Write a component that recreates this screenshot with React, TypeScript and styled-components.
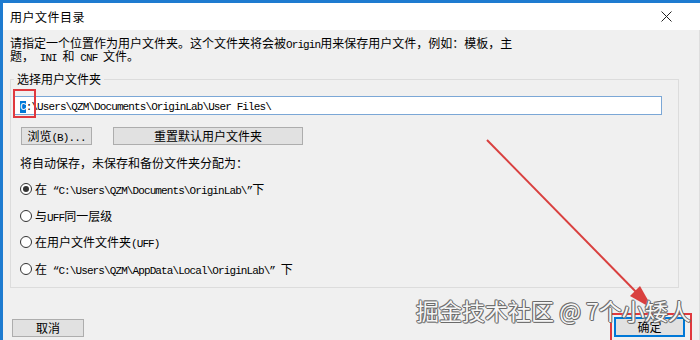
import React from "react";
import styled, { createGlobalStyle } from "styled-components";

const CJK = `"Noto Sans CJK SC", "Noto Sans", sans-serif`;

const Global = createGlobalStyle`
  html, body { margin: 0; padding: 0; background: #fff; }
  body { width: 700px; height: 340px; overflow: hidden; font-family: ${CJK}; }
`;

const Page = styled.div`
  position: relative;
  width: 700px;
  height: 340px;
  overflow: hidden;
`;

const Window = styled.div`
  width: 700px;
  height: 340px;
  box-sizing: border-box;
  border-top: 3px solid #1e7bd0;
  border-left: 3px solid #1e7bd0;
  display: flex;
  flex-direction: column;
  font-family: ${CJK};
  font-size: 12px;
  color: #000;
`;

const TitleBar = styled.div`
  height: 27px;
  flex: none;
  background: #fff;
  display: flex;
  align-items: center;
  justify-content: space-between;
  padding: 0 28px 0 7px;
`;

const Title = styled.span`
  font-size: 12px;
  letter-spacing: 0.5px;
  line-height: 14px;
`;

const Body = styled.div`
  flex: 1;
  background: #f0f0f0;
  display: flex;
  flex-direction: column;
  padding: 6px 14px 3px 7px;
  border-right: 1px solid #dedede;
`;

const Desc = styled.p`
  margin: 0;
  font-size: 12px;
  line-height: 13px;
`;

const Mono = styled.span`
  font-family: "Liberation Mono", monospace;
  font-size: 11px;
  line-height: 0;
  letter-spacing: -0.9px;
`;

const Label = styled.span`
  display: block;
  line-height: 14px;
  white-space: pre;
`;

const Group = styled.fieldset`
  margin: 10px 6px 0 0;
  border: 1px solid #dcdcdc;
  padding: 0 0 11px 0;
  min-width: 0;
`;

const Legend = styled.legend`
  margin-left: 3px;
  padding: 0 3px;
  font-size: 12px;
  line-height: 14px;
`;

const GroupInner = styled.div`
  display: flex;
  flex-direction: column;
  padding-top: 10px;
`;

const PathInput = styled.div`
  margin-left: 3px;
  width: 648px;
  height: 19px;
  box-sizing: border-box;
  background: #fff;
  border: 1px solid #7ba7d6;
  display: flex;
  align-items: center;
  padding-left: 5px;
`;

const Sel = styled.span`
  background: #0078d7;
  color: #fff;
  line-height: 12px;
  display: inline-block;
`;

const ButtonRow = styled.div`
  display: flex;
  gap: 21px;
  margin-top: 12px;
  padding-left: 10px;
`;

const Button = styled.div<{ $w: number; $focus?: boolean }>`
  width: ${(p) => p.$w}px;
  height: ${(p) => (p.$focus ? 20 : 18)}px;
  box-sizing: border-box;
  background: #e1e1e1;
  border: ${(p) => (p.$focus ? "2px solid #0078d7" : "1px solid #adadad")};
  display: flex;
  align-items: center;
  justify-content: center;
  font-size: 12px;
`;

const Note = styled.div`
  margin-top: 11px;
  padding-left: 9px;
  line-height: 14px;
`;

const RadioList = styled.div`
  display: flex;
  flex-direction: column;
  gap: 12.5px;
  margin-top: 12px;
  padding-left: 9px;
`;

const RadioRow = styled.div`
  display: flex;
  align-items: center;
  height: 14px;
`;

const RadioDot = styled.span<{ $on?: boolean }>`
  width: 12px;
  height: 12px;
  box-sizing: border-box;
  border-radius: 50%;
  border: 1px solid #333;
  background: #fff;
  margin-right: 3px;
  display: flex;
  align-items: center;
  justify-content: center;
  &::after {
    content: "";
    width: 6px;
    height: 6px;
    border-radius: 50%;
    background: ${(p) => (p.$on ? "#333" : "transparent")};
  }
`;

const Footer = styled.div`
  margin-top: auto;
  display: flex;
  justify-content: space-between;
  align-items: flex-end;
  padding-left: 2px;
`;

const RedBox = styled.div`
  position: absolute;
  border: 2px solid #e0393e;
  box-sizing: border-box;
`;

const Watermark = styled.div`
  position: absolute;
  left: 416px;
  top: 296px;
  font-family: ${CJK};
  font-size: 23px;
  line-height: 28px;
  color: #f6f6f6;
  white-space: pre;
  text-shadow: 1px 0 #6a6a6a, -1px 0 #6a6a6a, 0 1px #6a6a6a, 0 -1px #6a6a6a,
    1px 1px #8a8a8a, -1px -1px #8a8a8a;
`;

const ArrowLayer = styled.svg`
  position: absolute;
  left: 0;
  top: 0;
  pointer-events: none;
`;

const CloseIcon = () => (
  <svg width="11" height="11" viewBox="0 0 11 11">
    <path d="M0.5 0.5 L10.5 10.5 M10.5 0.5 L0.5 10.5" stroke="#222" strokeWidth="1" />
  </svg>
);

export default function App() {
  return (
    <>
      <Global />
      <Page>
        <Window>
          <TitleBar>
            <Title>用户文件目录</Title>
            <CloseIcon />
          </TitleBar>
          <Body>
            <Desc>
              请指定一个位置作为用户文件夹。这个文件夹将会被<Mono>Origin</Mono>用来保存用户文件，例如：模板，主
              <br />
              题，<Mono> INI </Mono>和<Mono> CNF </Mono>文件。
            </Desc>
            <Group>
              <Legend>选择用户文件夹</Legend>
              <GroupInner>
                <PathInput>
                  <Label>
                    <Mono>
                      <Sel>C</Sel>:\Users\QZM\Documents\OriginLab\User Files\
                    </Mono>
                  </Label>
                </PathInput>
                <ButtonRow>
                  <Button $w={71}>
                    <Label>
                      浏览<Mono>(B)...</Mono>
                    </Label>
                  </Button>
                  <Button $w={190}>
                    <Label>重置默认用户文件夹</Label>
                  </Button>
                </ButtonRow>
                <Note>将自动保存，未保存和备份文件夹分配为：</Note>
                <RadioList>
                  <RadioRow>
                    <RadioDot $on />
                    <Label>
                      在<Mono> “C:\Users\QZM\Documents\OriginLab\”</Mono>下
                    </Label>
                  </RadioRow>
                  <RadioRow>
                    <RadioDot />
                    <Label>
                      与<Mono>UFF</Mono>同一层级
                    </Label>
                  </RadioRow>
                  <RadioRow>
                    <RadioDot />
                    <Label>
                      在用户文件文件夹<Mono>(UFF)</Mono>
                    </Label>
                  </RadioRow>
                  <RadioRow>
                    <RadioDot />
                    <Label>
                      在<Mono> “C:\Users\QZM\AppData\Local\OriginLab\” </Mono>下
                    </Label>
                  </RadioRow>
                </RadioList>
              </GroupInner>
            </Group>
            <Footer>
              <Button $w={72}>
                <Label>取消</Label>
              </Button>
              <Button $w={71} $focus>
                <Label>确定</Label>
              </Button>
            </Footer>
          </Body>
        </Window>
        <RedBox style={{ left: 13, top: 89, width: 23, height: 29 }} />
        <RedBox style={{ left: 610, top: 313, width: 82, height: 30 }} />
        <ArrowLayer width="700" height="340" viewBox="0 0 700 340">
          <line x1="487" y1="140" x2="642" y2="298" stroke="#d9403f" strokeWidth="2" />
          <polygon points="653,309 630,296 640,286" fill="#d9403f" />
        </ArrowLayer>
        <Watermark>掘金技术社区 @ 7个小矮人</Watermark>
      </Page>
    </>
  );
}
